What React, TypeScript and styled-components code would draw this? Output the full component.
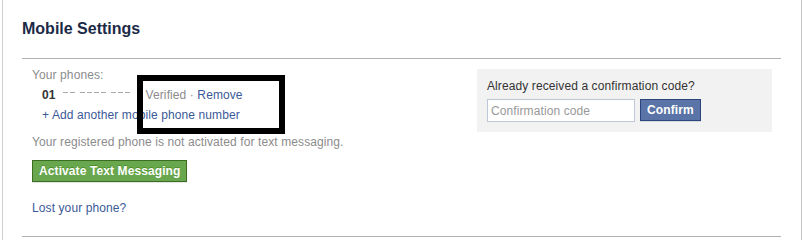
import React from "react"
import styled, { createGlobalStyle } from "styled-components"

const GlobalStyle = createGlobalStyle`
    html, body {
        margin: 0;
        padding: 0;
        background: #fff;
    }
    body {
        font-family: "Liberation Sans", Arial, sans-serif;
        font-size: 12px;
        letter-spacing: 0.1px;
    }
`

const StyledPage = styled.div`
    position: relative;
    width: 803px;
    height: 240px;
    overflow: hidden;
`

const StyledFrame = styled.div`
    box-sizing: border-box;
    margin-left: 2px;
    width: 800px;
    height: 240px;
    border-left: 1px solid #cfcfcf;
    border-right: 1px solid #c4c4c4;
    padding: 0 20px 0 19px;
`

const StyledHeader = styled.div`
    padding: 19px 0;
    border-bottom: 1px solid #b1b1b1;
`

const StyledTitle = styled.h2`
    margin: 0;
    font-size: 16px;
    line-height: 20px;
    font-weight: bold;
    letter-spacing: 0;
    color: #1c2a47;
`

const StyledBody = styled.div`
    display: flex;
    justify-content: space-between;
    align-items: flex-start;
    padding: 6px 0 18px 10px;
    border-bottom: 1px solid #b1b1b1;
`

const StyledColumn = styled.div`
    display: flex;
    flex-direction: column;
    line-height: 20px;
`

const StyledLabel = styled.div<{ gap?: number }>`
    color: #8c8c8c;
    margin-top: ${({ gap }) => gap || 0}px;
`

const StyledPhoneRow = styled.div`
    display: flex;
    align-items: center;
    padding-left: 10px;
    height: 20px;
`

const StyledNumber = styled.span`
    font-weight: bold;
    color: #333;
`

const StyledMask = styled.span`
    align-self: flex-start;
    display: inline-flex;
    margin: 7px 16px 0 7px;
`

const StyledMaskDigit = styled.span<{ spaced?: boolean }>`
    width: 5px;
    height: 1px;
    background: #a8a8a8;
    margin-left: ${({ spaced }) => spaced ? 5 : 2}px;
    &:first-child {
        margin-left: 0;
    }
`

const StyledMuted = styled.span`
    color: #8c8c8c;
`

const StyledLink = styled.a<{ indent?: number }>`
    color: #3b5998;
    text-decoration: none;
    cursor: pointer;
    padding-left: ${({ indent }) => indent || 0}px;
`

const StyledGreenButton = styled.button`
    align-self: flex-start;
    margin-top: 8px;
    height: 22px;
    padding: 0 6px;
    border: 1px solid #3b6e22;
    background: #69a74e;
    color: #fff;
    font-family: "Liberation Sans", Arial, sans-serif;
    font-size: 12px;
    font-weight: bold;
    letter-spacing: 0.1px;
    line-height: 20px;
    box-shadow: 0 1px 0 rgba(0, 0, 0, 0.1);
    text-shadow: 0 -1px 0 #4c9029;
    cursor: pointer;
`

const StyledLost = styled.div`
    margin-top: 16px;
`

const StyledCodeBox = styled.div`
    box-sizing: border-box;
    width: 295px;
    height: 63px;
    margin: 4px 9px 0 0;
    padding: 9px 10px 10px;
    background: #f2f2f2;
    line-height: 16px;
`

const StyledCodeTitle = styled.div`
    color: #333;
`

const StyledCodeRow = styled.div`
    display: flex;
    gap: 5px;
    margin-top: 5px;
`

const StyledInput = styled.input`
    box-sizing: border-box;
    width: 148px;
    height: 23px;
    padding: 0 3px;
    border: 1px solid #bdc7d8;
    background: #fff;
    font-family: "Liberation Sans", Arial, sans-serif;
    font-size: 12px;
    letter-spacing: 0.1px;
    outline: none;
    &::placeholder {
        color: #999;
    }
`

const StyledBlueButton = styled.button`
    box-sizing: border-box;
    height: 22px;
    padding: 0 6px;
    border: 1px solid #29447e;
    background: #5b74a8;
    color: #fff;
    font-family: "Liberation Sans", Arial, sans-serif;
    font-size: 12px;
    font-weight: bold;
    letter-spacing: 0.1px;
    line-height: 20px;
    box-shadow: 0 1px 0 rgba(0, 0, 0, 0.1);
    cursor: pointer;
`

const StyledRedaction = styled.div`
    position: absolute;
    left: 137px;
    top: 75px;
    width: 148px;
    height: 59px;
    box-sizing: border-box;
    border: 6px solid #000;
    pointer-events: none;
`

const MASK = [false, false, true, false, false, false, true, false, false]

export default function App() {
    return <StyledPage>
        <GlobalStyle />
        <StyledFrame>

            <StyledHeader>
                <StyledTitle>Mobile Settings</StyledTitle>
            </StyledHeader>

            <StyledBody>
                <StyledColumn>
                    <StyledLabel>Your phones:</StyledLabel>
                    <StyledPhoneRow>
                        <StyledNumber>01</StyledNumber>
                        <StyledMask>
                            {MASK.map((spaced, i) => <StyledMaskDigit key={i} spaced={spaced} />)}
                        </StyledMask>
                        <StyledMuted>Verified ·&nbsp;</StyledMuted>
                        <StyledLink>Remove</StyledLink>
                    </StyledPhoneRow>
                    <StyledLink indent={10}>+ Add another mobile phone number</StyledLink>
                    <StyledLabel gap={7}>Your registered phone is not activated for text messaging.</StyledLabel>
                    <StyledGreenButton>Activate Text Messaging</StyledGreenButton>
                    <StyledLost>
                        <StyledLink>Lost your phone?</StyledLink>
                    </StyledLost>
                </StyledColumn>

                <StyledCodeBox>
                    <StyledCodeTitle>Already received a confirmation code?</StyledCodeTitle>
                    <StyledCodeRow>
                        <StyledInput placeholder="Confirmation code" />
                        <StyledBlueButton>Confirm</StyledBlueButton>
                    </StyledCodeRow>
                </StyledCodeBox>
            </StyledBody>

        </StyledFrame>
        <StyledRedaction />
    </StyledPage>
}
